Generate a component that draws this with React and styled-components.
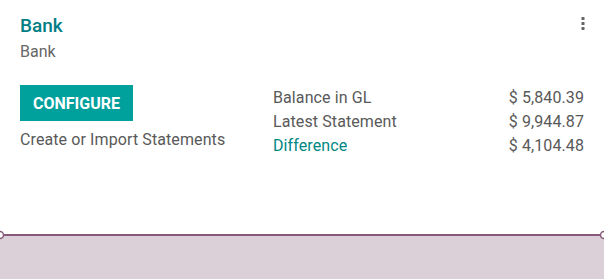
import React from 'react';
import styled, { createGlobalStyle } from 'styled-components';

const GlobalStyle = createGlobalStyle`
  html, body {
    margin: 0;
    padding: 0;
    background: #ffffff;
    height: 279px;
    overflow: hidden;
  }
  body {
    font-family: Roboto, "Noto Sans", "Liberation Sans", sans-serif;
    color: #595959;
  }
`;

const Card = styled.div`
  display: flex;
  flex-direction: column;
  height: 279px;
  background: #ffffff;
`;

const Body = styled.div`
  padding: 14px 20px 0 20px;
`;

const Header = styled.div`
  display: flex;
  justify-content: space-between;
  align-items: flex-start;
`;

const Title = styled.div`
  font-size: 19px;
  font-weight: 500;
  line-height: 24px;
  color: #017e84;
`;

const Subtitle = styled.div`
  font-size: 16px;
  line-height: 22px;
  color: #666666;
  margin-top: 3px;
`;

const MenuToggle = styled.button`
  border: none;
  background: none;
  padding: 0;
  margin-top: 2px;
  margin-right: -2px;
  width: 6px;
  height: 16px;
  display: flex;
  justify-content: center;
  cursor: pointer;
`;

const Content = styled.div`
  display: grid;
  grid-template-columns: 253px 1fr;
  margin-top: 22px;
`;

const LeftCol = styled.div`
  display: flex;
  flex-direction: column;
  align-items: flex-start;
`;

const ConfigureButton = styled.button`
  background: #00a09d;
  color: #ffffff;
  border: none;
  font-family: inherit;
  font-size: 16px;
  font-weight: 700;
  height: 36px;
  padding: 0 13px;
  cursor: pointer;
`;

const Hint = styled.div`
  font-size: 16px;
  line-height: 24px;
  margin-top: 7px;
  letter-spacing: 0.1px;
`;

const Stats = styled.div`
  display: flex;
  flex-direction: column;
  padding-top: 1px;
`;

const StatRow = styled.div`
  display: flex;
  justify-content: space-between;
  font-size: 16px;
  line-height: 24px;
  letter-spacing: 0.1px;
`;

const StatLabel = styled.span`
  color: ${(p) => (p.$link ? '#008784' : 'inherit')};
`;

const Chart = styled.svg`
  display: block;
  margin-top: auto;
  width: 604px;
  height: 49px;
  flex-shrink: 0;
`;

const stats = [
  { label: 'Balance in GL', value: '$ 5,840.39' },
  { label: 'Latest Statement', value: '$ 9,944.87' },
  { label: 'Difference', value: '$ 4,104.48', link: true },
];

export default function App() {
  return (
    <>
      <GlobalStyle />
      <Card>
        <Body>
          <Header>
            <div>
              <Title>Bank</Title>
              <Subtitle>Bank</Subtitle>
            </div>
            <MenuToggle aria-label="menu">
              <svg width="4" height="14" viewBox="0 0 4 14">
                <rect x="0.5" y="1" width="3" height="3" rx="0.6" fill="#666" />
                <rect x="0.5" y="6" width="3" height="3" rx="0.6" fill="#666" />
                <rect x="0.5" y="11" width="3" height="3" rx="0.6" fill="#666" />
              </svg>
            </MenuToggle>
          </Header>
          <Content>
            <LeftCol>
              <ConfigureButton>CONFIGURE</ConfigureButton>
              <Hint>Create or Import Statements</Hint>
            </LeftCol>
            <Stats>
              {stats.map((s) => (
                <StatRow key={s.label}>
                  <StatLabel $link={s.link}>{s.label}</StatLabel>
                  <span>{s.value}</span>
                </StatRow>
              ))}
            </Stats>
          </Content>
        </Body>
        {/* flat balance graph */}
        <Chart viewBox="0 0 604 49" preserveAspectRatio="none">
          <rect x="0" y="5" width="604" height="44" fill="#dcd0d8" />
          <line x1="0" y1="5" x2="604" y2="5" stroke="#875a7b" strokeWidth="2" />
          <circle cx="0" cy="5" r="3.5" fill="#ffffff" stroke="#875a7b" strokeWidth="1.5" />
          <circle cx="604" cy="5" r="3.5" fill="#ffffff" stroke="#875a7b" strokeWidth="1.5" />
        </Chart>
      </Card>
    </>
  );
}
